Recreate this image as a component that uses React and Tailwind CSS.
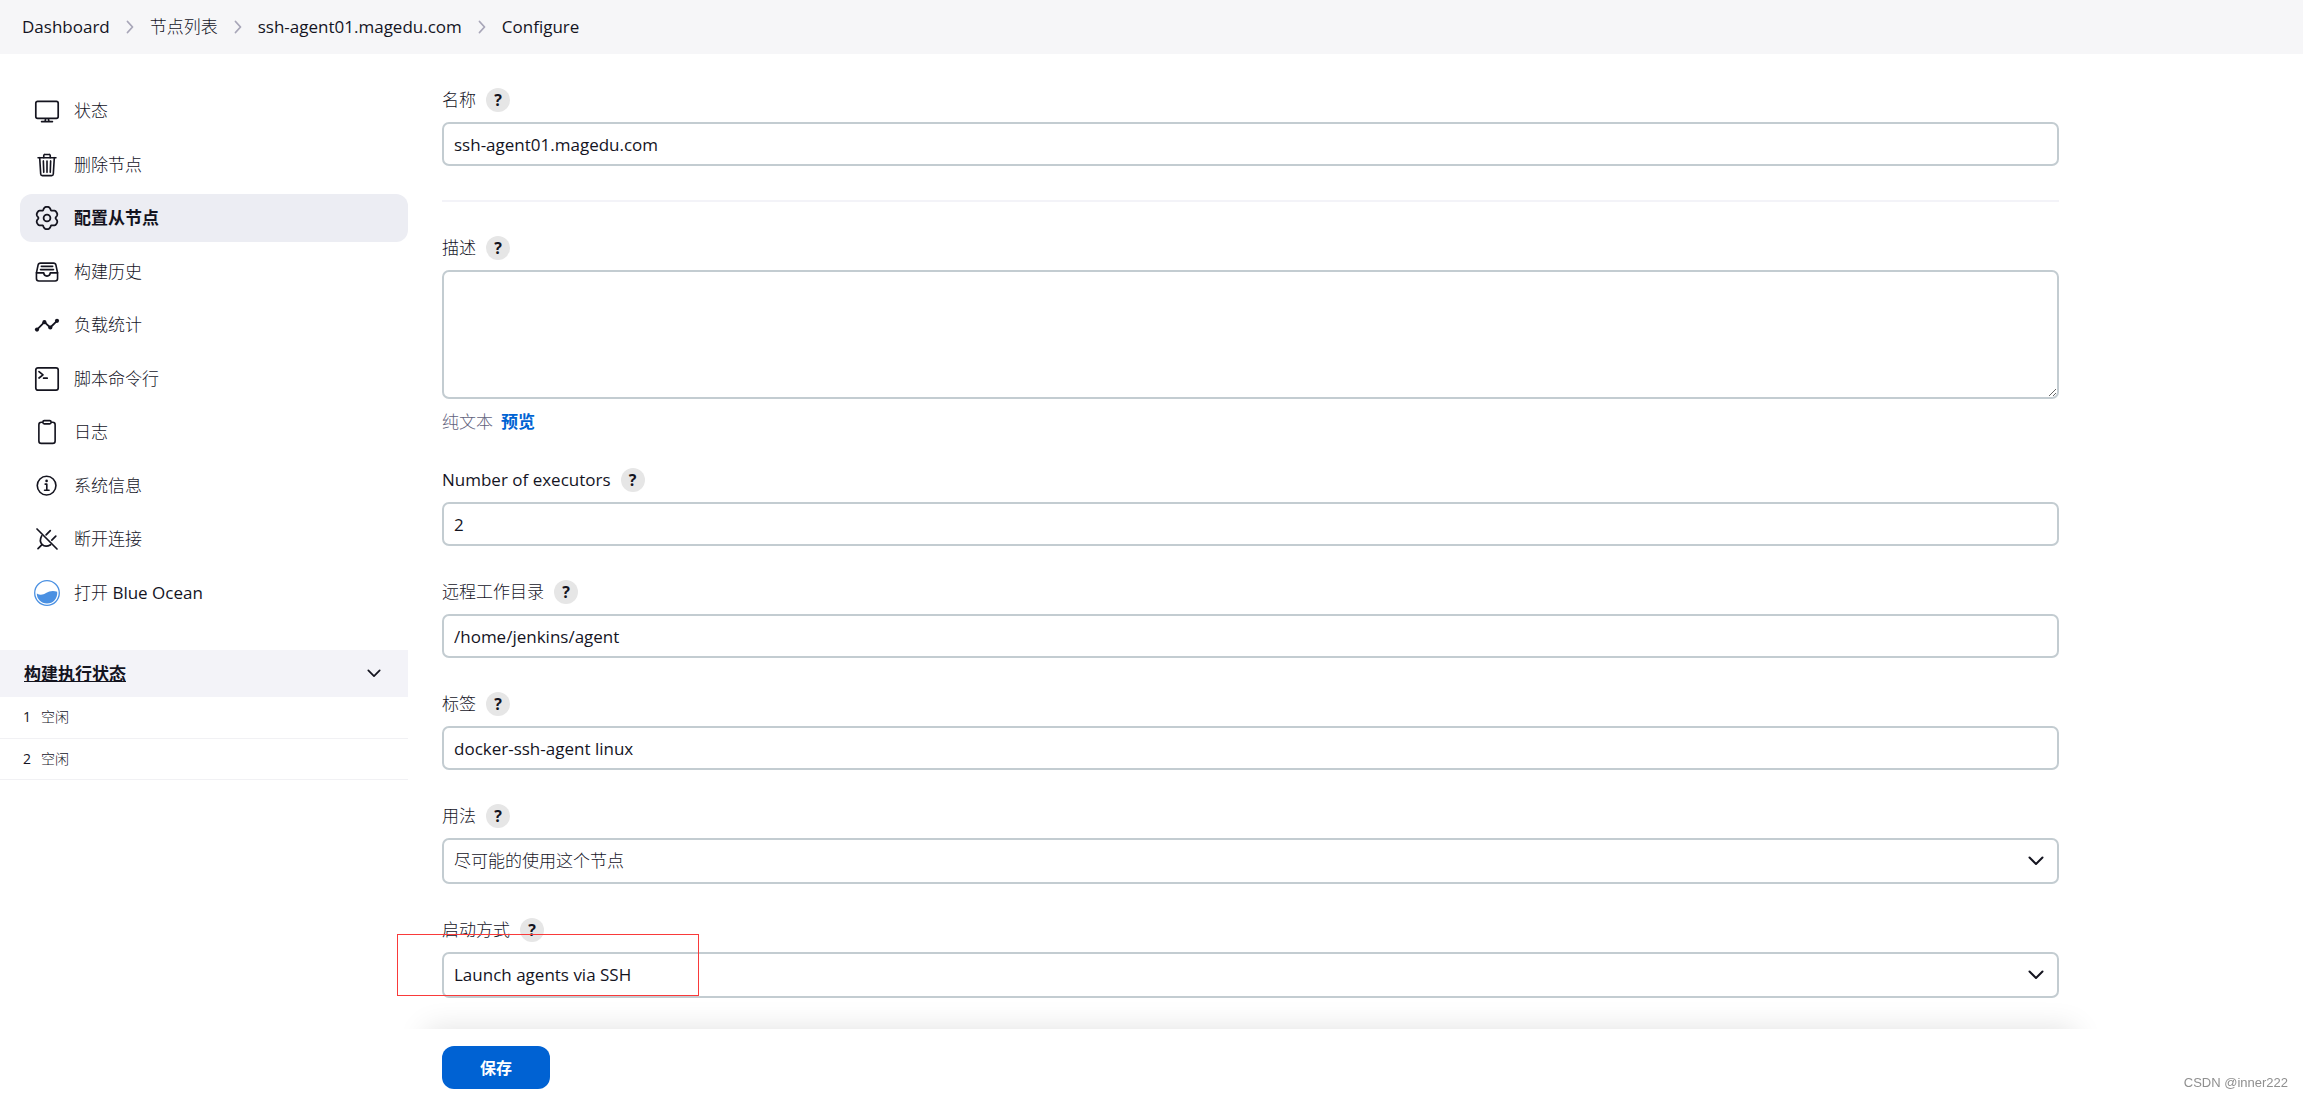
import {
  IoTrashOutline,
  IoFileTrayFullOutline,
  IoClipboardOutline,
  IoInformationCircleOutline
} from 'react-icons/io5';

function ComputerIcon() {
  return (
    <svg viewBox="0 0 26 26" className="w-[26px] h-[26px]" fill="none" stroke="currentColor" strokeWidth="1.7" strokeLinecap="round" strokeLinejoin="round">
      <rect x="1.8" y="3.4" width="22.4" height="17" rx="1.8" />
      <path d="M11.6 20.8l-.5 2.6M14.4 20.8l.5 2.6M7.6 23.6h10.8" />
    </svg>
  );
}

// Six broad lobes with narrow notches between them
const GEAR_POINTS = Array.from({ length: 120 }, (_, i) => {
  const angle = (i * Math.PI) / 60;
  const r = 11.1 - 2.5 * Math.sin(3 * angle) ** 4;
  return `${(13 + r * Math.sin(angle)).toFixed(2)},${(13 - r * Math.cos(angle)).toFixed(2)}`;
}).join(' ');

function GearIcon() {
  return (
    <svg viewBox="0 0 26 26" className="w-[26px] h-[26px]" fill="none" stroke="currentColor" strokeWidth="1.8" strokeLinejoin="round">
      <polygon points={GEAR_POINTS} />
      <circle cx="13" cy="13" r="3.4" />
    </svg>
  );
}

function LoadIcon() {
  return (
    <svg viewBox="0 0 26 26" className="w-[26px] h-[26px]" fill="none" stroke="currentColor" strokeWidth="1.8" strokeLinecap="round" strokeLinejoin="round">
      <path d="M3 17.600l7.400-7.400 5.900 5.300L23 8.800" />
      <g fill="currentColor" stroke="none">
        <circle cx="3" cy="17.600" r="2.100" />
        <circle cx="10.400" cy="10.200" r="2.100" />
        <circle cx="16.300" cy="15.500" r="2.100" />
        <circle cx="23" cy="8.800" r="2.100" />
      </g>
    </svg>
  );
}

function TerminalIcon() {
  return (
    <svg viewBox="0 0 26 26" className="w-[26px] h-[26px]" fill="none" stroke="currentColor" strokeWidth="1.7" strokeLinecap="round" strokeLinejoin="round">
      <rect x="1.8" y="1.8" width="22.4" height="22.4" rx="2.2" />
      <path d="M5 5.6l4 3.2-4 3.2M9.6 12.2h3.6" />
    </svg>
  );
}

function PlugOffIcon() {
  return (
    <svg viewBox="0 0 26 26" className="w-[26px] h-[26px]" fill="none" stroke="currentColor" strokeWidth="1.7" strokeLinecap="round" strokeLinejoin="round">
      <path d="M3 3l20 20M16.3 4.6l-4.2 4.2M21.8 10.2l-4 4M4 22.6l4-4" />
      <path d="M7.7 9.800c-1.600 2.800-1.600 6.400.3 8.600 2.200 2.200 5.600 2.200 8.600.3" />
    </svg>
  );
}

function BlueOceanIcon() {
  return (
    <svg viewBox="0 0 26 26" className="w-[26px] h-[26px]">
      <circle cx="13" cy="13" r="12.300" fill="none" stroke="#4a90e2" strokeWidth="1.300" />
      <path d="M2.800 13.600c3.200 1.800 6.200 1.400 9.200-.5 3.300-2 7-2.800 11.200-1.300.6 7-4.200 11.800-10.200 11.800-5.800 0-10.200-4.500-10.200-10z" fill="#4a90e2" />
    </svg>
  );
}

function Chevron({ className }) {
  return (
    <svg viewBox="0 0 16 10" className={className} fill="none" stroke="currentColor" strokeWidth="2" strokeLinecap="round" strokeLinejoin="round">
      <path d="M1.500 1.500L8 8l6.500-6.500" />
    </svg>
  );
}

const CRUMBS = ['Dashboard', '节点列表', 'ssh-agent01.magedu.com', 'Configure'];

const TASKS = [
  { icon: ComputerIcon, label: '状态' },
  { icon: IoTrashOutline, label: '删除节点' },
  { icon: GearIcon, label: '配置从节点', active: true },
  { icon: IoFileTrayFullOutline, label: '构建历史' },
  { icon: LoadIcon, label: '负载统计' },
  { icon: TerminalIcon, label: '脚本命令行' },
  { icon: IoClipboardOutline, label: '日志' },
  { icon: IoInformationCircleOutline, label: '系统信息' },
  { icon: PlugOffIcon, label: '断开连接' },
  { icon: BlueOceanIcon, label: '打开', product: 'Blue Ocean' }
];

const EXECUTORS = [
  { number: 1, state: '空闲' },
  { number: 2, state: '空闲' }
];

const INPUT = 'block w-full rounded-[7px] border-2 border-[#c3ccd1] bg-white px-[10px]';

// Chinese text is set in the light weight, Latin text in the regular one
const weightOf = text => (/^[\x20-\x7e]*$/.test(text) ? 'font-normal' : 'font-light');

function Breadcrumbs() {
  return (
    <nav className="h-[54px] bg-[#f6f6f8] px-[22px] flex items-center">
      <ol className="flex items-center">
        {CRUMBS.map((crumb, i) => (
          <li key={crumb} className="flex items-center">
            {i > 0 && (
              <svg viewBox="0 0 8 14" className="w-2 h-[14px] mx-4 text-[#a8a6b8]" fill="none" stroke="currentColor" strokeWidth="1.800" strokeLinecap="round" strokeLinejoin="round">
                <path d="M1.500 1.500L6.500 7l-5 5.500" />
              </svg>
            )}
            <a href="#" className={weightOf(crumb)}>{crumb}</a>
          </li>
        ))}
      </ol>
    </nav>
  );
}

function SidePanel() {
  return (
    <aside className="w-[408px] shrink-0 pt-[33px]">
      <ul className="pl-5 min-h-[530px] flex flex-col justify-between">
        {TASKS.map(({ icon: Icon, label, product, active }) => (
          <li key={label}>
            <a
              href="#"
              className={`h-12 pl-[14px] flex items-center gap-[14px] rounded-xl ${
                active ? 'bg-[#ecedf3] font-bold' : ''
              }`}
            >
              <Icon className="w-[26px] h-[26px]" />
              <span>
                {label}
                {product && <span className="font-normal"> {product}</span>}
              </span>
            </a>
          </li>
        ))}
      </ul>

      <section className="mt-[33px]">
        <div className="h-[47px] bg-[#f3f3f8] pl-6 pr-[25px] flex items-center justify-between">
          <a href="#" className="font-bold underline">构建执行状态</a>
          <button type="button" aria-label="折叠" className="p-[2px]">
            <Chevron className="w-[14px] h-[9px]" />
          </button>
        </div>
        <table className="w-full text-sm">
          <tbody>
            {EXECUTORS.map(({ number, state }) => (
              <tr key={number} className="h-[41px] border-b border-[#f1f1f4]">
                <td className="w-[41px] pl-[23px] font-normal">{number}</td>
                <td>{state}</td>
              </tr>
            ))}
          </tbody>
        </table>
      </section>
    </aside>
  );
}

function Field({ id, label, children }) {
  return (
    <div className="relative">
      <div className="h-6 mb-[10px] flex items-center gap-[10px]">
        <label htmlFor={id} className={weightOf(label)}>{label}</label>
        <button
          type="button"
          aria-label={`${label} ?`}
          className="w-6 h-6 rounded-full bg-[#e6e6e6] text-base leading-6 font-bold text-center"
        >
          ?
        </button>
      </div>
      {children}
    </div>
  );
}

function SelectField({ id, label, value, children }) {
  return (
    <Field id={id} label={label}>
      <div className="relative">
        <select id={id} defaultValue={value} className={`${INPUT} h-[46px] appearance-none ${weightOf(value)}`}>
          <option>{value}</option>
        </select>
        <Chevron className="absolute right-[15px] top-[18px] w-4 h-[10px] pointer-events-none" />
      </div>
      {children}
    </Field>
  );
}

function TextField({ id, label, value }) {
  return (
    <Field id={id} label={label}>
      <input id={id} type="text" defaultValue={value} className={`${INPUT} h-11 ${weightOf(value)}`} />
    </Field>
  );
}

export default function App() {
  return (
    <div className="min-h-screen flex flex-col bg-white text-[#14141f] text-[17px] leading-6 font-light font-['Open_Sans','Noto_Sans_CJK_SC',sans-serif]">
      <Breadcrumbs />

      <div className="flex-1 flex">
        <SidePanel />

        <main className="flex-1 min-w-0 max-w-[1651px] pl-[34px] flex flex-col">
          <form className="flex-1 flex flex-col" onSubmit={e => e.preventDefault()}>
            <div className="pt-[34px] pb-7 flex flex-col gap-[34px]">
              <TextField id="name" label="名称" value="ssh-agent01.magedu.com" />
              <hr className="border-0 h-[2px] bg-[#f3f3f8]" />
              <Field id="description" label="描述">
                <textarea id="description" className={`${INPUT} h-[129px] py-2 resize-y`} />
                <div className="mt-[11px] flex gap-2">
                  <span className="text-[#62627c]">纯文本</span>
                  <a href="#" className="font-bold text-[#0063d3]">预览</a>
                </div>
              </Field>
              <TextField id="executors" label="Number of executors" value="2" />
              <TextField id="remote-fs" label="远程工作目录" value="/home/jenkins/agent" />
              <TextField id="labels" label="标签" value="docker-ssh-agent linux" />
              <SelectField id="usage" label="用法" value="尽可能的使用这个节点" />
              <SelectField id="launcher" label="启动方式" value="Launch agents via SSH">
                {/* Annotation frame */}
                <div className="absolute -left-[45px] top-4 w-[302px] h-[62px] border border-[#f93a3a] pointer-events-none" />
              </SelectField>
            </div>

            {/* Save bar */}
            <div className="sticky bottom-0 mt-auto">
              <div className="absolute -inset-x-4 inset-y-0 shadow-[0_0_30px_rgba(0,0,0,0.12)]" />
              <div className="absolute -inset-x-[50px] inset-y-0 bg-white" />
              <div className="relative pt-[17px] pb-[9px]">
                <button type="submit" className="w-[108px] h-[43px] rounded-xl bg-[#0062d3] text-white text-base font-bold">
                  保存
                </button>
              </div>
            </div>
          </form>
        </main>
      </div>

      <div className="fixed right-[15px] bottom-[5px] text-[13px] leading-5 font-normal text-[#8f8f8f] font-['Liberation_Sans',sans-serif]">
        CSDN @inner222
      </div>
    </div>
  );
}
